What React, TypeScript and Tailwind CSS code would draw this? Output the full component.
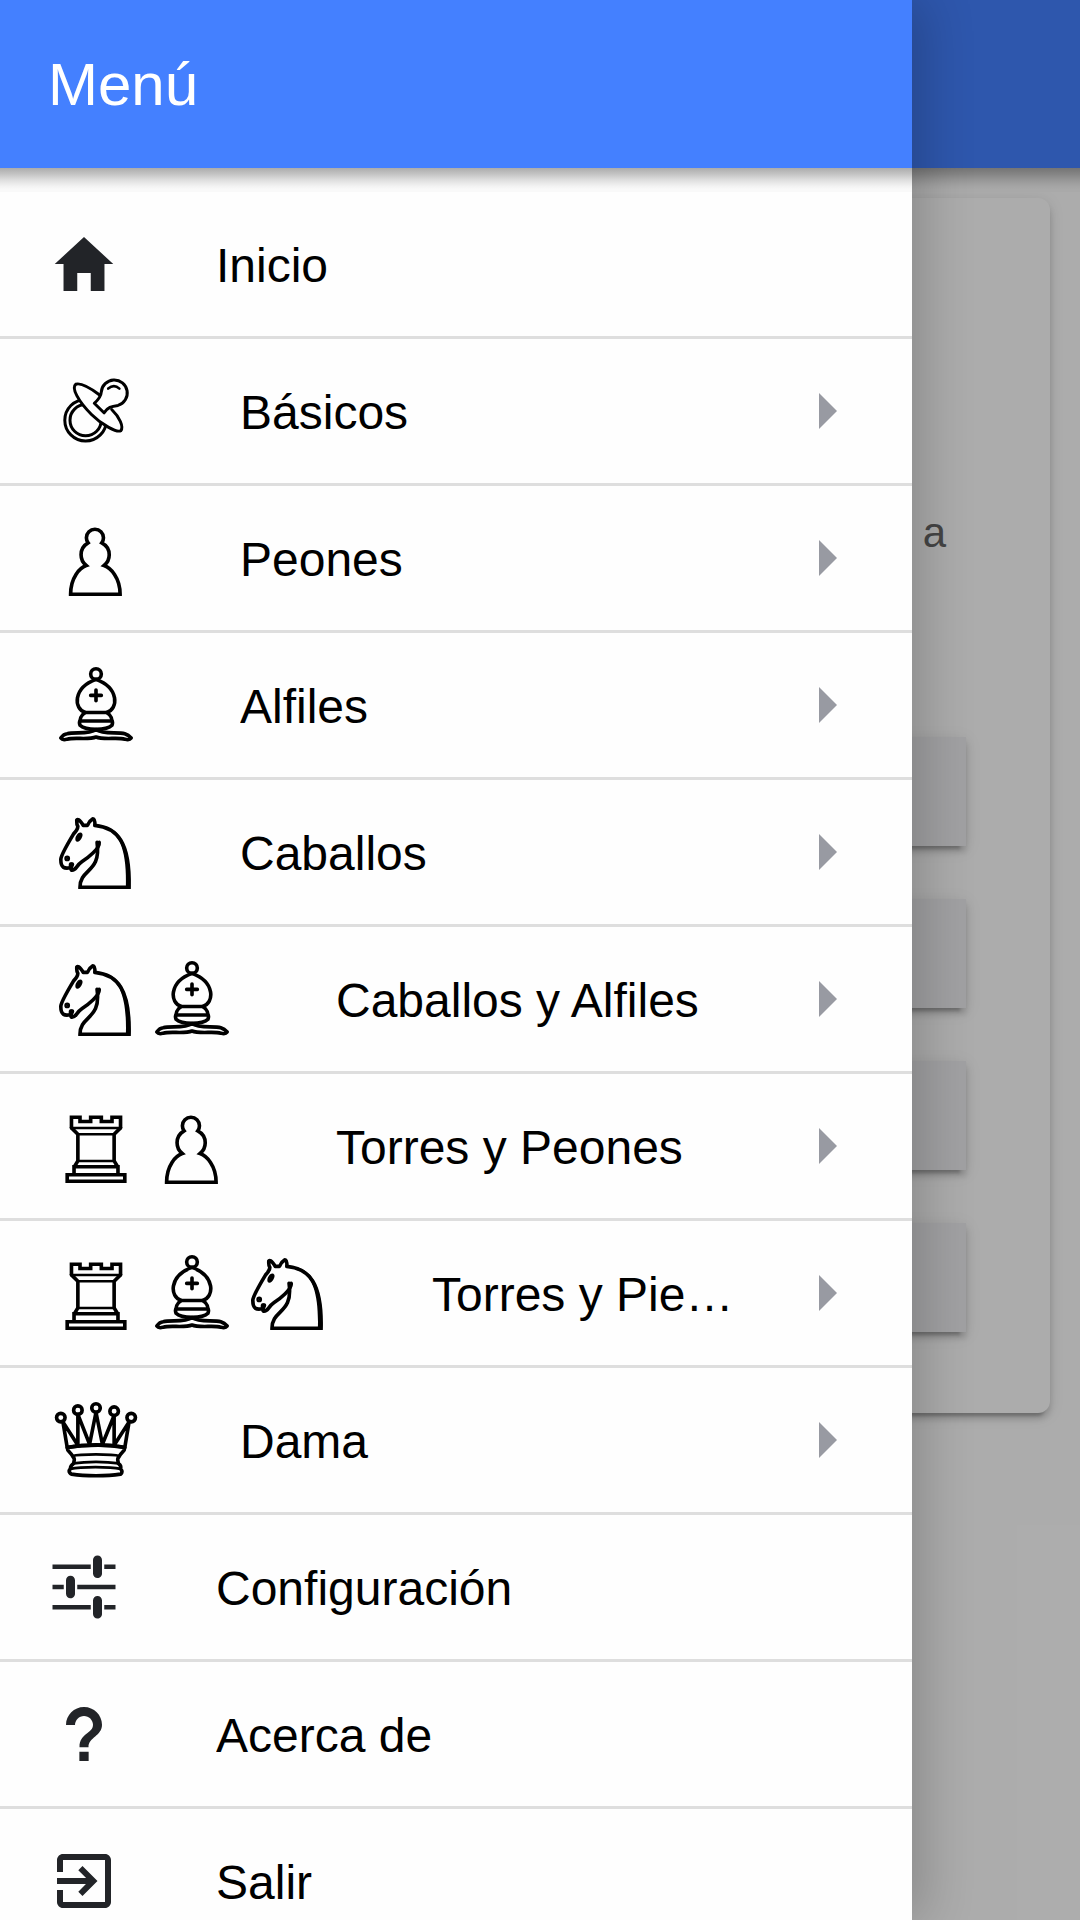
import React from 'react';
import { IoMdArrowDropright, IoMdExit, IoMdHelp, IoMdHome, IoMdOptions } from 'react-icons/io';

type Piece = 'pacifier' | 'pawn' | 'bishop' | 'knight' | 'rook' | 'queen';

function Board({ children }: { children: React.ReactNode }) {
  return (
    <svg
      viewBox="0 0 45 45"
      className="size-24 shrink-0"
      fill="none"
      stroke="#000"
      strokeWidth="1.7"
      strokeLinecap="round"
      strokeLinejoin="round"
    >
      {children}
    </svg>
  );
}

function PieceIcon({ piece }: { piece: Piece }) {
  switch (piece) {
    case 'pacifier':
      return (
        <svg
          viewBox="0 0 96 96"
          className="size-24 shrink-0"
          fill="none"
          stroke="#000"
          strokeWidth="3"
          strokeLinecap="round"
          strokeLinejoin="round"
        >
          <circle cx="37.6" cy="57.2" r="20.8" />
          <circle cx="37.6" cy="57.2" r="15.6" />
          <path
            fill="#fefefe"
            d="M51.3 31.7C43 25.5 33 19.5 27.8 21.2 23 25 30.5 38.5 43.5 51.5 54 62 69 70 72.8 67.7 76 64 71.5 54 63.7 46.5"
          />
          <path fill="#fefefe" d="M46.3 40.3C50 37 53 34 53.3 29A13 13 0 1 1 70 42.4C63.5 43.3 59.5 44.5 56 49.8z" />
          <path d="M60.2 25.6Q66 20.6 71.4 25.6" strokeWidth="2.6" />
        </svg>
      );
    case 'pawn':
      return (
        <Board>
          <path
            strokeLinejoin="miter"
            d="M22 9c-2.21 0-4 1.79-4 4 0 .89.29 1.71.78 2.38C16.83 16.5 15.5 18.59 15.5 21c0 2.03.94 3.84 2.41 5.03-3 1.06-7.31 5.55-7.31 13.47h23.2c0-7.92-4.51-12.41-7.51-13.47 1.47-1.19 2.41-3 2.41-5.03 0-2.41-1.33-4.5-3.48-5.62.49-.67.78-1.49.78-2.38 0-2.21-1.79-4-4-4z"
          />
        </Board>
      );
    case 'bishop':
      return (
        <Board>
          <path d="M9 36c3.39-.97 10.11.43 13.5-2 3.39 2.43 10.11 1.03 13.5 2 0 0 1.65.54 3 2-.68.97-1.65.99-3 .5-3.39-.97-10.11.46-13.5-1-3.39 1.46-10.11.03-13.5 1-1.354.49-2.323.47-3-.5 1.354-1.94 3-2 3-2z" />
          <path d="M15 32c2.5 2.5 12.5 2.5 15 0 .5-1.5 0-2 0-2 0-2.5-2.5-4-2.5-4 5.5-1.5 6-11.5-5-15.5-11 4-10.5 14-5 15.5 0 0-2.5 1.5-2.5 4 0 0-.5.5 0 2z" />
          <path d="M25 8a2.5 2.5 0 1 1-5 0 2.5 2.5 0 1 1 5 0z" />
          <path d="M17.5 26h10M15 30h15m-7.5-14.5v5M20 18h5" />
        </Board>
      );
    case 'knight':
      return (
        <Board>
          <path strokeLinejoin="miter" d="M22 10c10.5 1 16.5 8 16 29H15c0-9 10-6.5 8-21" />
          <path d="M24 18c.38 2.91-5.55 7.37-8 9-3 2-2.82 4.34-5 4-1.042-.94 1.41-3.04 0-3-1 0 .19 1.23-1 2-1 0-4.003 1-4-4 0-2 6-12 6-12s1.89-1.9 2-3.5c-.73-.994-.5-2-.5-3 1-1 3 2.5 3 2.5h2s.78-1.992 2.5-3c1 0 1 3 1 3" />
          <path fill="#000" d="M9.5 25.5a.5.5 0 1 1-1 0 .5.5 0 1 1 1 0zM14.933 15.75a.5 1.5 30 1 1-.866-.5.5 1.5 30 1 1 .866.5z" />
          <path stroke="none" fill="#000" d="M27 11.2C34 14 37 23 36.5 39H38.5C39 20 34 12.5 27 10.5z" />
        </Board>
      );
    case 'rook':
      return (
        <Board>
          <path strokeLinejoin="miter" d="M9 39h27v-3H9v3zM12.2 36v-3.8h20.6V36zM11 14V9h4v2h5V9h5v2h5V9h4v5" />
          <path d="M34 14l-3 3M14 17l-3-3M31 17v12.5M14 29.5V17M31 29.5l1.5 2.5M12.5 32l1.5-2.5" />
          <path strokeWidth="1.2" d="M11 14.1h23M14 17h17M14 29.5h17" />
        </Board>
      );
    case 'queen':
      return (
        <Board>
          <circle cx="6" cy="12" r="2" />
          <circle cx="14" cy="8.5" r="2" />
          <circle cx="22.5" cy="7.5" r="2" />
          <circle cx="31" cy="9" r="2" />
          <circle cx="39" cy="12" r="2" />
          <path d="M9 26c8.5-1.5 21-1.5 27 0l2-12-7 11V11l-5.5 13.5-3-15-3 15-5.5-14V25L7 14l2 12z" />
          <path d="M9 26c0 2 1.5 2 2.5 4 1 1.5 1 1 .5 3.5-1.5 1-1.5 2.5-1.5 2.5-1.5 1.5.5 2.5.5 2.5 6.5 1 16.5 1 23 0 0 0 1.5-1 0-2.5 0 0 .5-1.5-1-2.5-.5-2.5-.5-2 .5-3.5 1-2 2.5-2 2.5-4-8.5-1.5-18.5-1.5-27 0z" />
          <path strokeWidth="1.3" d="M11.5 30c3.5-1 18.5-1 22 0M12 33.5c6-1 15-1 21 0M10.5 36c5-1 18.5-1 23.5 0" />
        </Board>
      );
  }
}

function Header({ title }: { title?: string }) {
  return (
    <header className="relative flex h-[168px] shrink-0 items-center bg-[#4480ff] px-12 pt-0.5 text-[60px] leading-none text-white">
      {title}
      <div className="absolute inset-x-0 top-full h-6 bg-[linear-gradient(#acacac_0%,#c3c3c3_25%,#dedede_50%,#f2f2f2_75%,#f9f9f9_88%,#f9f9f9_100%)]" />
    </header>
  );
}

interface Entry {
  label: string;
  icon?: React.ComponentType<{ className?: string }>;
  pieces?: Piece[];
}

const entries: Entry[] = [
  { label: 'Inicio', icon: IoMdHome },
  { label: 'Básicos', pieces: ['pacifier'] },
  { label: 'Peones', pieces: ['pawn'] },
  { label: 'Alfiles', pieces: ['bishop'] },
  { label: 'Caballos', pieces: ['knight'] },
  { label: 'Caballos y Alfiles', pieces: ['knight', 'bishop'] },
  { label: 'Torres y Peones', pieces: ['rook', 'pawn'] },
  { label: 'Torres y Pie…', pieces: ['rook', 'bishop', 'knight'] },
  { label: 'Dama', pieces: ['queen'] },
  { label: 'Configuración', icon: IoMdOptions },
  { label: 'Acerca de', icon: IoMdHelp },
  { label: 'Salir', icon: IoMdExit },
];

function MenuRow({ entry }: { entry: Entry }) {
  const Icon = entry.icon;
  return (
    <li className="flex h-[147px] shrink-0 items-center border-b-[3px] border-[#dedede] px-12">
      {Icon && <Icon className="size-[72px] shrink-0 text-[#222428]" />}
      {entry.pieces?.map((piece) => <PieceIcon key={piece} piece={piece} />)}
      <span className="mr-12 ml-24 min-w-0 flex-1 truncate pt-[3px] text-5xl leading-[60px] text-black">{entry.label}</span>
      {entry.pieces && <IoMdArrowDropright className="size-[72px] shrink-0 text-[#989aa2]" />}
    </li>
  );
}

function Page() {
  return (
    <div className="flex h-full flex-col bg-[#fefefe]">
      <Header />
      <section className="mx-[30px] mt-[30px] flex h-[1215px] flex-col rounded-xl bg-[#fefefe] px-[84px] shadow-[0_9px_3px_-6px_rgba(0,0,0,0.2),0_6px_6px_0_rgba(0,0,0,0.14),0_3px_15px_0_rgba(0,0,0,0.12)]">
        <p className="mt-[303px] mr-5 h-[63px] text-right text-[42px] leading-[63px] text-[#666]">a</p>
        <div className="mt-[173px] flex flex-col gap-[53px]">
          {[0, 1, 2, 3].map((n) => (
            <div
              key={n}
              className="h-[109px] bg-[#eeeef1] shadow-[0_9px_3px_-6px_rgba(0,0,0,0.2),0_6px_6px_0_rgba(0,0,0,0.14),0_3px_15px_0_rgba(0,0,0,0.12)]"
            />
          ))}
        </div>
      </section>
    </div>
  );
}

export default function App() {
  return (
    <div className="relative h-[1920px] w-[1080px] overflow-hidden font-['Liberation_Sans',Arial,sans-serif]">
      <Page />
      <div className="absolute inset-0 bg-black/32" />
      <nav className="absolute inset-y-0 left-0 flex w-[912px] flex-col bg-[#fefefe] shadow-[12px_0_48px_rgba(0,0,0,0.2)]">
        <Header title="Menú" />
        <ul className="flex min-h-0 flex-1 flex-col overflow-hidden pt-6">
          {entries.map((entry) => (
            <MenuRow key={entry.label} entry={entry} />
          ))}
        </ul>
      </nav>
    </div>
  );
}
